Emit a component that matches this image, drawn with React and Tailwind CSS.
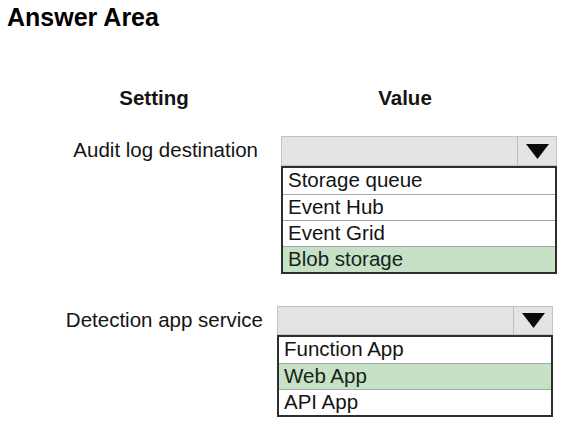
import React from "react";

const lists = [
  {
    label: "Audit log destination",
    labelWidth: "w-[258px]",
    gap: "ml-[23px]",
    boxH: "h-[30px]",
    top: "mt-[26px]",
    options: ["Storage queue", "Event Hub", "Event Grid", "Blob storage"],
    selected: 3,
  },
  {
    label: "Detection app service",
    labelWidth: "w-[263px]",
    gap: "ml-[14px]",
    boxH: "h-[29px]",
    top: "mt-[32px]",
    options: ["Function App", "Web App", "API App"],
    selected: 1,
  },
];

const Caret = () => (
  <svg width="23" height="15" viewBox="0 0 23 15">
    <polygon points="0,0 23,0 11.5,15" fill="#0a0a0a" />
  </svg>
);

const Dropdown = ({ options, selected, boxH }) => (
  <div className="w-[276px]">
    <div
      className={`flex ${boxH} border border-[#c3c3c3] bg-[#e4e4e4]`}
    >
      <div className="flex-1" />
      <div className="w-[39px] border-l border-[#bdbdbd] flex items-center justify-center">
        <Caret />
      </div>
    </div>
    <ul className="border-2 border-[#2e2e2e] bg-white">
      {options.map((opt, i) => (
        <li
          key={opt}
          className={`h-[26px] pl-[5px] leading-[23px] ${
            i > 0 ? "border-t border-[#a8a8a8]" : ""
          } ${i === selected ? "bg-[#c6e1c6] text-[#15241a]" : "text-[#141414]"}`}
        >
          {opt}
        </li>
      ))}
    </ul>
  </div>
);

export default function App() {
  return (
    <div
      className="w-[568px] h-[427px] overflow-hidden bg-white text-[#141414]"
      style={{ fontFamily: '"Liberation Sans", Arial, sans-serif' }}
    >
      <h1 className="pl-[7px] pt-[3px] text-[25px] leading-[28px] font-bold text-black">
        Answer Area
      </h1>

      <div className="flex mt-[55px] text-[20.5px] leading-[24px] font-bold">
        <div className="w-[308px] text-center">Setting</div>
        <div className="w-[194px] text-center">Value</div>
      </div>

      {lists.map((row) => (
        <div key={row.label} className={`flex items-start ${row.top} text-[20.5px]`}>
          <div className={`${row.labelWidth} text-right leading-[28px]`}>
            {row.label}
          </div>
          <div className={row.gap}>
            <Dropdown
              options={row.options}
              selected={row.selected}
              boxH={row.boxH}
            />
          </div>
        </div>
      ))}
    </div>
  );
}
